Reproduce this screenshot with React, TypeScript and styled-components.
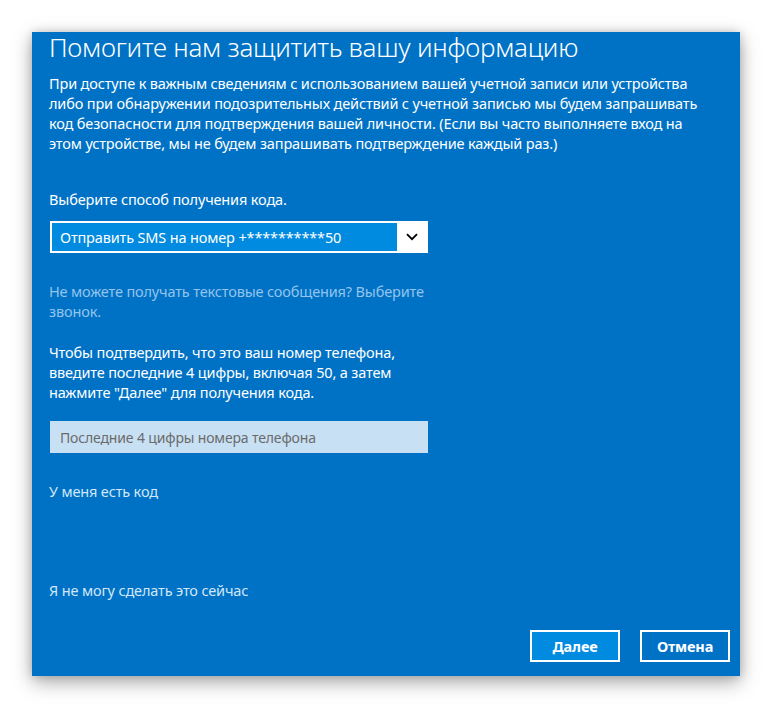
import React from "react";
import styled, { createGlobalStyle } from "styled-components";

const Global = createGlobalStyle`
  html, body { margin: 0; padding: 0; background: #ffffff; }
  body { font-family: "Noto Sans", "Open Sans", sans-serif; }
`;

const Page = styled.div`
  width: 772px;
  height: 708px;
  padding: 32px 0 0 32px;
  box-sizing: border-box;
  overflow: hidden;
`;

const Panel = styled.div`
  width: 708px;
  height: 644px;
  box-sizing: border-box;
  background: #0072c6;
  color: #ffffff;
  padding: 0 10px 14px 17px;
  display: flex;
  flex-direction: column;
  box-shadow: 0 6px 18px rgba(0, 0, 0, 0.35), 0 0 8px rgba(0, 0, 0, 0.15);
`;

const Title = styled.h1`
  margin: 0;
  font-family: "Noto Sans", sans-serif;
  font-weight: 300;
  font-size: 26px;
  line-height: 31px;
  letter-spacing: -0.25px;
`;

const Text = styled.p<{ $tone?: "dim" | "soft" }>`
  margin: 0;
  font-size: 14.5px;
  line-height: 20px;
  letter-spacing: -0.15px;
  color: ${(p) =>
    p.$tone === "dim" ? "#93c4ec" : p.$tone === "soft" ? "#d2e7f8" : "#ffffff"};
`;

const Select = styled.div`
  margin-top: 12px;
  width: 378px;
  height: 32px;
  box-sizing: border-box;
  border: 2px solid #ffffff;
  display: flex;
  margin-left: 1px;
`;

const SelectValue = styled.div`
  flex: 1;
  background: #008ae0;
  color: #ffffff;
  font-size: 14.5px;
  letter-spacing: -0.15px;
  display: flex;
  align-items: center;
  padding-left: 8px;
`;

const SelectArrow = styled.div`
  width: 29px;
  background: #ffffff;
  display: flex;
  align-items: center;
  justify-content: center;
`;

const Input = styled.div`
  margin-left: 1px;
  width: 378px;
  height: 32px;
  box-sizing: border-box;
  background: #c8e0f4;
  color: #6b6b6b;
  font-size: 14px;
  letter-spacing: -0.15px;
  display: flex;
  align-items: center;
  padding-left: 10px;
`;

const Footer = styled.div`
  margin-top: auto;
  display: flex;
  justify-content: flex-end;
  gap: 20px;
`;

const Button = styled.button<{ $primary?: boolean }>`
  width: 90px;
  height: 32px;
  box-sizing: border-box;
  border: 2px solid #ffffff;
  background: ${(p) => (p.$primary ? "#008ae0" : "transparent")};
  color: #ffffff;
  font-family: "Noto Sans", sans-serif;
  font-weight: 700;
  font-size: 14.5px;
  letter-spacing: -0.2px;
  padding: 0;
`;

const Spacer = styled.div<{ $h: number }>`
  height: ${(p) => p.$h}px;
  flex: none;
`;

export default function App() {
  return (
    <Page>
      <Global />
      <Panel>
        <Title>Помогите нам защитить вашу информацию</Title>
        <Spacer $h={10} />
        <Text>
          При доступе к важным сведениям с использованием вашей учетной записи или устройства
          <br />
          либо при обнаружении подозрительных действий с учетной записью мы будем запрашивать
          <br />
          код безопасности для подтверждения вашей личности. (Если вы часто выполняете вход на
          <br />
          этом устройстве, мы не будем запрашивать подтверждение каждый раз.)
        </Text>
        <Spacer $h={36} />
        <Text>Выберите способ получения кода.</Text>
        <Select>
          <SelectValue>Отправить SMS на номер +**********50</SelectValue>
          <SelectArrow>
            <svg width="12" height="8" viewBox="0 0 12 8">
              <path d="M1 1.2 L6 6.2 L11 1.2" fill="none" stroke="#000" strokeWidth="1.8" />
            </svg>
          </SelectArrow>
        </Select>
        <Spacer $h={28} />
        <Text $tone="dim">
          Не можете получать текстовые сообщения? Выберите
          <br />
          звонок.
        </Text>
        <Spacer $h={21} />
        <Text>
          Чтобы подтвердить, что это ваш номер телефона,
          <br />
          введите последние 4 цифры, включая 50, а затем
          <br />
          нажмите "Далее" для получения кода.
        </Text>
        <Spacer $h={19} />
        <Input>Последние 4 цифры номера телефона</Input>
        <Spacer $h={28} />
        <Text $tone="soft">У меня есть код</Text>
        <Spacer $h={79} />
        <Text $tone="soft">Я не могу сделать это сейчас</Text>
        <Footer>
          <Button $primary>Далее</Button>
          <Button>Отмена</Button>
        </Footer>
      </Panel>
    </Page>
  );
}
